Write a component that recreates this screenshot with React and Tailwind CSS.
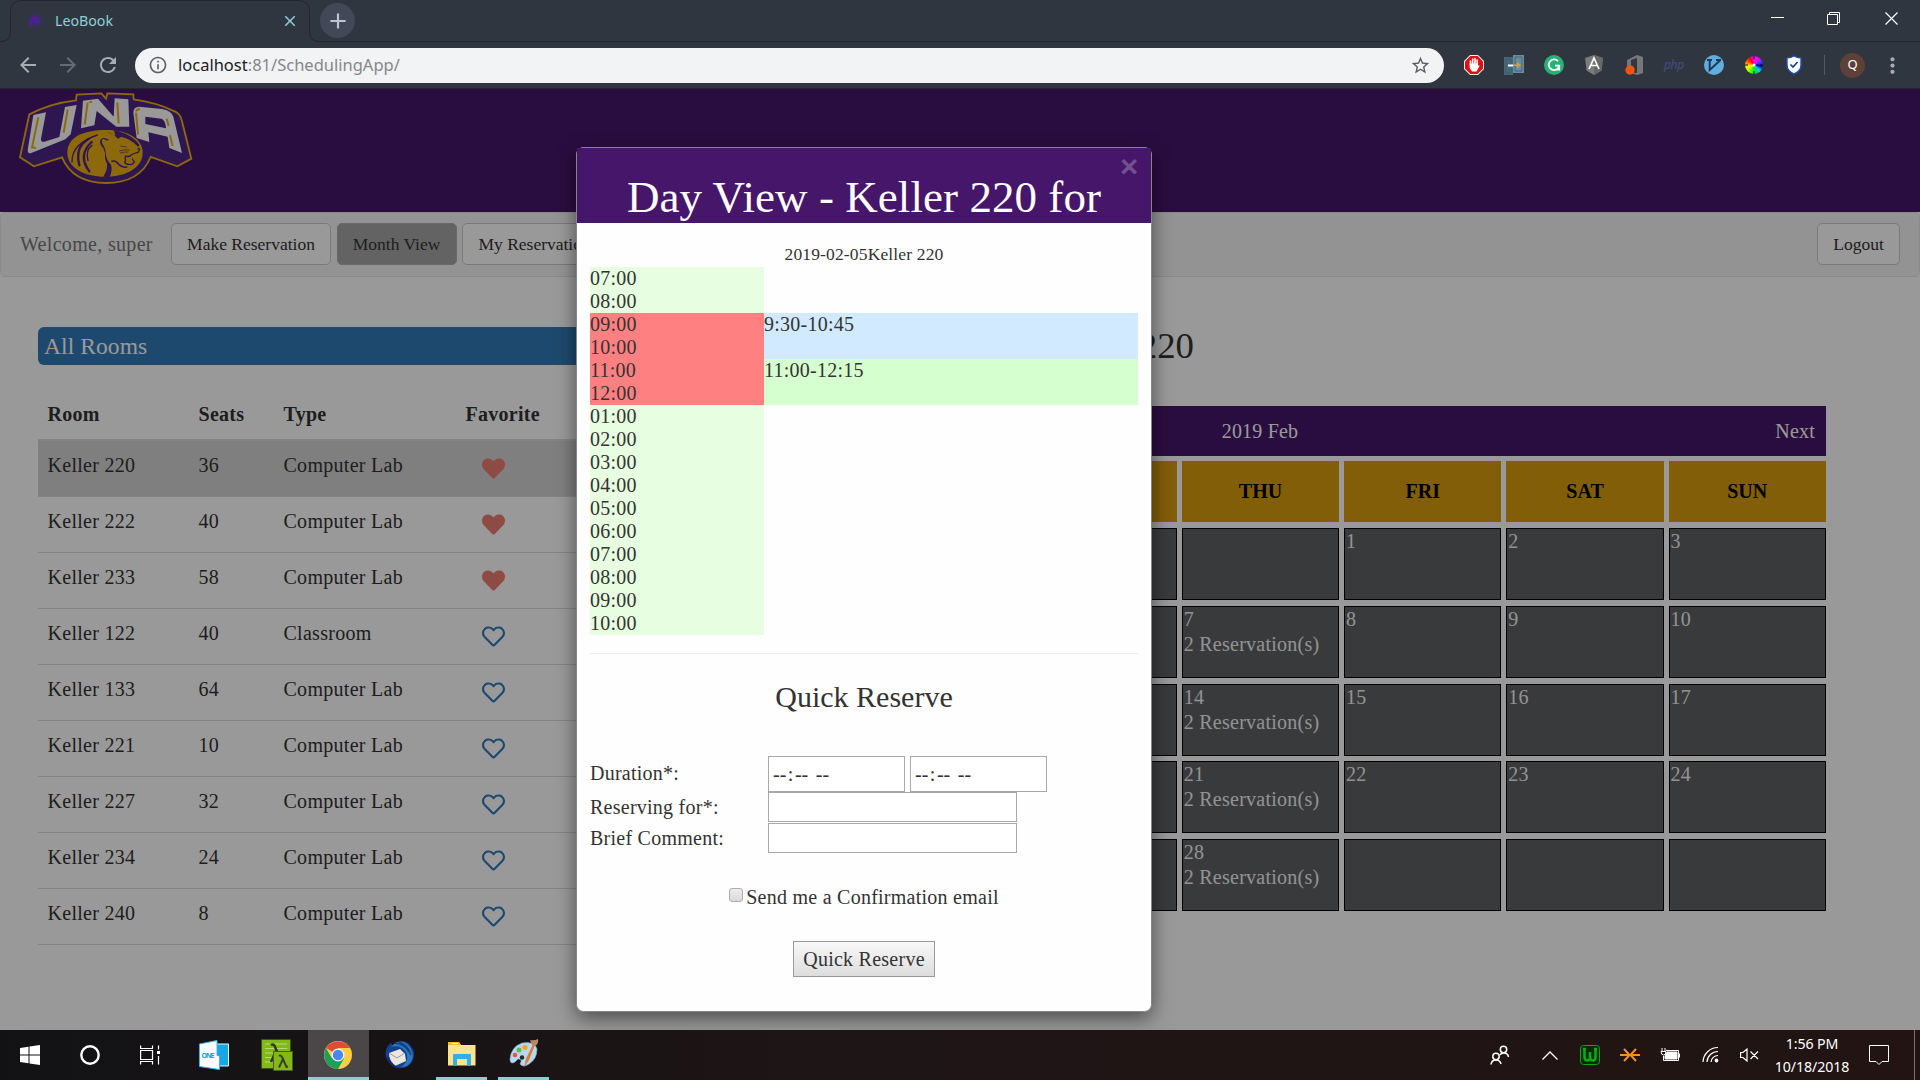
import React from "react";
import {
  MdArrowBack,
  MdArrowForward,
  MdRefresh,
  MdInfoOutline,
  MdStarBorder,
  MdClose,
  MdAdd,
  MdMoreVert,
} from "react-icons/md";
import { FaHeart, FaRegHeart } from "react-icons/fa";

const rooms = [
  ["Keller 220", 36, "Computer Lab", true],
  ["Keller 222", 40, "Computer Lab", true],
  ["Keller 233", 58, "Computer Lab", true],
  ["Keller 122", 40, "Classroom", false],
  ["Keller 133", 64, "Computer Lab", false],
  ["Keller 221", 10, "Computer Lab", false],
  ["Keller 227", 32, "Computer Lab", false],
  ["Keller 234", 24, "Computer Lab", false],
  ["Keller 240", 8, "Computer Lab", false],
];

const weekdays = ["MON", "TUE", "WED", "THU", "FRI", "SAT", "SUN"];

// February 2019 starts on a Friday; Tuesdays and Thursdays hold two classes.
const days = Array.from({ length: 35 }, (_, i) => {
  const day = i - 3;
  return {
    day: day >= 1 && day <= 28 ? day : null,
    booked: day >= 1 && day <= 28 && (i % 7 === 1 || i % 7 === 3),
  };
});

const hours = [
  "07:00", "08:00", "09:00", "10:00", "11:00", "12:00", "01:00", "02:00",
  "03:00", "04:00", "05:00", "06:00", "07:00", "08:00", "09:00", "10:00",
];

function Browser() {
  return (
    <div className="h-[89px] shrink-0 bg-[#303640] font-['Noto_Sans',sans-serif]">
      <div className="relative flex h-[42px] items-start">
        <svg className="absolute left-0 top-0" width="1920" height="42" fill="none">
          <path
            d="M0 41.5H2Q10.5 41 10.5 32V11Q11 .5 21 .5H299Q309.5 1 309.5 11V32Q310 41.5 319 41.5H1920"
            stroke="#22272f"
          />
        </svg>
        <div className="relative flex h-[42px] w-[310px] items-center pl-[25px]">
          <svg width="20" height="20" viewBox="0 0 20 20">
            <circle cx="10" cy="10" r="9" fill="#36305a" opacity=".6" />
            <path d="M5 10Q5 5 10 5Q16 6 15 12L13 14Q10 11 7 12Q7 14 8 16Q4 14 5 10Z" fill="#4a2092" />
          </svg>
          <span className="ml-[10px] text-[14.2px] text-[#8fd0d4]">LeoBook</span>
          <MdClose className="ml-auto mr-[11px] text-[#8fd0d4]" size={18} />
        </div>
        <div className="relative ml-[10px] mt-[3px] flex h-[35px] w-[35px] items-center justify-center rounded-full bg-[#424857] text-[#bdc3d3]">
          <MdAdd size={26} />
        </div>
        <div className="relative ml-auto mr-[22px] flex h-[37px] items-center gap-[43px]">
          <div className="mb-[2px] h-px w-[13px] bg-white" />
          <svg width="13" height="13" fill="none" stroke="#fff">
            <path d="M.5 2.5H10.5V12.5H.5ZM2.5 2.5V.5H12.5V10.5H10.5" />
          </svg>
          <svg width="13" height="13" fill="none" stroke="#fff" className="ml-[2px]" strokeWidth="1.2">
            <path d="M.5 .5L12.5 12.5M12.5 .5L.5 12.5" />
          </svg>
        </div>
      </div>
      <div className="flex h-[47px] items-center border-b border-[#22272b] pl-4 pr-[15px]">
        <MdArrowBack size={24} color="#a9acb1" />
        <MdArrowForward className="ml-4" size={24} color="#666b73" />
        <MdRefresh className="ml-4" size={24} color="#a9acb1" />
        <div className="ml-[15px] flex h-[35px] w-[1309px] items-center rounded-full bg-[#f1f3f4] pl-[13px] pr-[13px]">
          <MdInfoOutline size={20} color="#5f6368" />
          <span className="ml-[10px] text-[16.5px] text-[#84888c]">
            <span className="text-[#1d2023]">localhost</span>:81/SchedulingApp/
          </span>
          <MdStarBorder className="ml-auto" size={21} color="#5a5e63" />
        </div>
        <Extensions />
        <div className="ml-[20px] h-5 w-px bg-[#565a62]" />
        <div className="ml-[15px] flex h-[25px] w-[25px] items-center justify-center rounded-full bg-[#5d4037] text-[13px] text-white">
          Q
        </div>
        <MdMoreVert className="ml-auto" size={25} color="#a9acb1" />
      </div>
    </div>
  );
}

function Extensions() {
  return (
    <div className="ml-5 flex items-center gap-5">
      <svg width="20" height="20" viewBox="0 0 20 20">
        <path d="M6 0H14L20 6V14L14 20H6L0 14V6Z" fill="#eee" />
        <path d="M6.4 1H13.6L19 6.4V13.6L13.6 19H6.4L1 13.6V6.4Z" fill="#e01010" />
        <path d="M6.500 10V6M8.700 9V4M11 9V3.500M13.200 9V5" stroke="#fff" strokeWidth="1.600" strokeLinecap="round" />
        <path d="M5.700 8.500H14V11L15 10Q16 10 15 12L12.500 16.500H8L5.700 13Z" fill="#fff" />
      </svg>
      <svg width="20" height="20" viewBox="0 0 20 20">
        <path d="M0 2H9V20H0Z" fill="#466778" />
        <path d="M9 0H20V18H9Z" fill="#6c8b9c" />
        <path d="M11 2H18V16H11ZM2 4H7V18H2Z" fill="none" stroke="#38596a" strokeWidth=".7" />
        <path d="M4 10.500H9" stroke="#fff" strokeWidth="2" />
        <path d="M9 9.500H13V7L17 10L13 13V11H9Z" fill="#f39a1d" />
      </svg>
      <svg width="20" height="20" viewBox="0 0 20 20" fill="none">
        <circle cx="10" cy="10" r="10" fill="#25b373" />
        <path d="M14 6.200A5.300 5.300 0 1 0 15.300 10.600H11M15.200 10.500V14.500H12" stroke="#fff" strokeWidth="1.8" />
      </svg>
      <svg width="20" height="20" viewBox="0 0 20 20">
        <path d="M10 0L19 3L17.500 15.500L10 20L2.500 15.500L1 3Z" fill="#7b7b7b" />
        <path d="M10 0L19 3L17.500 15.500L10 20Z" fill="#686868" />
        <path d="M5 14L10 3L15 14M7 10.500H13" fill="none" stroke="#fff" strokeWidth="1.7" />
      </svg>
      <svg width="20" height="20" viewBox="0 0 20 20">
        <path d="M3 5L13 0L19 2V18L13 20L4 17L13 18V3L7 5V14L3 15Z" fill="#777" />
        <circle cx="6" cy="15" r="4.700" fill="#f25511" />
      </svg>
      <span className="w-5 text-center text-[12px] italic leading-5 text-[#454d88]">
        <span className="-mx-1 tracking-[-.2px]">php</span>
      </span>
      <svg width="20" height="20" viewBox="0 0 20 20" fill="none">
        <circle cx="10" cy="10" r="10" fill="#62ade0" />
        <path d="M3 5H8M12 5H17M5.700 5.500V15L16 5.500" stroke="#1d3b52" strokeWidth="2" />
      </svg>
      <div className="flex h-5 w-5 items-center justify-center">
        <div className="flex h-[18px] w-[18px] items-center justify-center rounded-full bg-[conic-gradient(#f0f,#f0f,#44f,#00a,#0cf,#0d5,#2f0,#bf0,#fe0,#f60,#f00,#f0f)]">
          <svg width="18" height="18" stroke="#111" strokeWidth="1">
            <path d="M9 0V3M9 15V18M0 9H3M15 9H18" />
            <circle cx="9" cy="9" r="1.500" fill="#fff" stroke="none" />
          </svg>
        </div>
      </div>
      <svg width="20" height="20" viewBox="0 0 20 20">
        <path d="M10 1Q13 3 17 3V10Q17 16 10 19Q3 16 3 10V3Q7 3 10 1Z" fill="#fff" stroke="#1c4fb8" strokeWidth="1.400" />
        <path d="M6.500 9.500L9 12L13.500 7" fill="none" stroke="#173f99" strokeWidth="1.700" />
      </svg>
    </div>
  );
}

function Logo() {
  return (
    <svg width="190" height="101" viewBox="0 9 570 303" className="ml-[10px]">
      <path
        d="M58 85Q120 52 198 43L200 26L274 22L288 38L292 22L370 25L371 40Q440 50 487 73Q510 80 515 102L544 218L502 241L422 213Q390 291 288 291Q188 290 156 214L72 241L30 214Z"
        fill="#4d2686"
        stroke="#ecaf14"
        strokeWidth="5.500"
      />
      <g fill="#fff">
        <path d="M70 87L108 79L93 158Q93 170 103 167L148 153L165 63L200 57L182 145L166 160L62 202Q50 203 54 187Z" />
        <path d="M219 44L264 38L311 92L314 37L355 40L358 122L319 122L260 75L253 118L213 127Z" />
        <path
          fillRule="evenodd"
          d="M370 80Q370 62 388 62L456 69Q484 74 490 92L516 201L478 186L473 152L415 139L418 168L380 156ZM406 92V114L468 127Q466 101 454 98Z"
        />
      </g>
      <g fill="none" stroke="#ecaf14" strokeWidth="6">
        <path d="M85 94L66 184L78 186M173 70L161 140M233 50L224 116M238 48H246M322 50L326 112M378 76Q380 70 390 69M378 80L384 146M470 98L476 120M480 148L488 180" />
      </g>
      <path d="M172 200C172 154 218 132 290 132C352 132 398 158 398 200C398 244 350 272 286 272C220 272 172 244 172 200Z" fill="#ecaf14" />
      <path d="M312 133L316 149L290 138Q306 141 324 158L334 152Q362 158 384 182L389 178Q372 150 326 136Z" fill="#4d2686" />
      <path d="M281 159Q273 159 277 174Q285 182 287 200Q288 222 303 236Q308 252 299 274L280 272Q293 252 291 234Q283 218 285 200Q281 184 272 176Q265 159 281 155L296 160Q292 167 288 162Z" fill="#4d2686" />
      <g fill="none" stroke="#4d2686" strokeLinecap="round">
        <path d="M186 228Q184 174 262 147" strokeWidth="4" />
        <path d="M208 238Q194 182 236 159" strokeWidth="7" />
        <path d="M238 256Q202 208 245 168" strokeWidth="7" />
        <path d="M234 224Q226 192 246 178" strokeWidth="4" />
        <path d="M332 180L349 183M328 195Q345 189 358 192M331 201Q345 197 354 198" strokeWidth="2" />
        <path d="M384 187L389 190L384 199Q371 201 362 208Q359 214 347 210Q343 216 347 222Q343 227 346 232Q366 241 373 228L367 219" strokeWidth="4" />
        <path d="M306 226Q317 222 326 235Q338 246 350 243" strokeWidth="5" />
      </g>
    </svg>
  );
}

function SchedulePage() {
  return (
    <>
      <header className="h-[123px] overflow-hidden bg-[#46166b]">
        <Logo />
      </header>
      <nav className="flex h-[65px] items-start rounded-[5px] border border-[#e7e7e7] bg-[#f6f6f6] pl-[19px] pr-[19px] pt-[10px] text-[17.5px] text-[#333]">
        <span className="w-[151px] text-[20px] leading-[42px] tracking-[.32px] text-[#777]">Welcome, super</span>
        <button className="h-[42px] w-[160px] rounded-[5px] border border-[#ccc] bg-white">Make Reservation</button>
        <button className="ml-[6px] h-[42px] w-[120px] rounded-[5px] border border-[#adadad] bg-[#a6a6a6] pr-px">Month View</button>
        <button className="ml-[5px] h-[42px] w-[152px] rounded-[5px] border border-[#ccc] bg-white">My Reservations</button>
        <button className="ml-auto h-[42px] w-[83px] rounded-[5px] border border-[#ccc] bg-white">Logout</button>
      </nav>
      <main className="flex pl-[38px]">
        <section className="w-[620px] pt-[50px] tracking-[.28px]">
          <h3 className="h-[38px] rounded-[6px] bg-[#337ab7] pl-[6px] text-[23.5px] leading-[38px] tracking-[.08px] text-white">
            All Rooms
          </h3>
          <div className="grid h-[76px] grid-cols-[151px_85px_182px_auto] border-b-2 border-[#ddd] pl-[9.5px] pt-[35px] font-bold leading-[28px]">
            <span>Room</span>
            <span>Seats</span>
            <span>Type</span>
            <span>Favorite</span>
          </div>
          {rooms.map(([name, seats, type, fav], i) => (
            <div
              key={name}
              className={
                "grid h-[56px] grid-cols-[151px_85px_198.500px_auto] border-b border-[#ddd] pl-[9.5px] pt-[10px] leading-[28px] " +
                (i === 0 ? "bg-[#d4d4d4]" : "")
              }
            >
              <span>{name}</span>
              <span>{seats}</span>
              <span>{type}</span>
              {fav ? (
                <FaHeart className="mt-[6px]" size={23} color="#ed7d70" />
              ) : (
                <FaRegHeart className="mt-[6px]" size={23} color="#337ab7" />
              )}
            </div>
          ))}
        </section>
        <section className="ml-[37px] w-[1131px] pt-[49px]">
          <h2 className="w-[499px] text-right text-[36.8px] leading-[40px]">Keller 220</h2>
          <div className="mt-[40px] grid h-[50px] grid-cols-3 bg-[#46166b] pl-[10px] pr-[11px] leading-[51px] tracking-[.2px] text-white">
            <span>Prev</span>
            <span className="text-center">2019 Feb</span>
            <span className="text-right">Next</span>
          </div>
          <div className="mt-[5px] grid grid-cols-7 gap-x-[4.8px]">
            {weekdays.map((d) => (
              <div key={d} className="h-[61px] bg-[#d99d0f] text-center font-bold leading-[60px] text-black">
                {d}
              </div>
            ))}
          </div>
          <div className="mt-[6px] grid grid-cols-7 gap-x-[4.8px] gap-y-[5.75px] leading-[25px] tracking-[.25px] text-[#f4f4f4]">
            {days.map(({ day, booked }, i) => (
              <div key={i} className="h-[72px] border border-black bg-[#5e6163] pl-[1px]">
                <div>{day}</div>
                {booked && <div>2 Reservation(s)</div>}
              </div>
            ))}
          </div>
        </section>
      </main>
    </>
  );
}

function TimeField() {
  return (
    <div className="flex h-[36px] w-[137px] items-center border border-[#a9a9a9] bg-white pl-[4px] tracking-normal">
      <span>--</span>
      <span className="mx-[1.5px]">:</span>
      <span>--</span>
      <span className="ml-[7.5px]">--</span>
    </div>
  );
}

function DayDialog() {
  return (
    <div className="absolute left-[576px] top-[58px] flex h-[865px] w-[576px] flex-col rounded-[7.5px] border border-[#888] bg-[#fefefe] tracking-[.25px] text-[#333] shadow-[0_6px_19px_rgba(0,0,0,0.5)]">
      <div className="relative h-[75px] shrink-0 bg-[#46166b] pt-[23.5px] text-center text-[45px] leading-[50px] tracking-[.06px] text-white">
        Day View - Keller 220 for
        <span className="absolute right-[12px] top-[2px] text-[34px] font-bold leading-[34px] text-[#73508f] [-webkit-text-stroke:1px_#73508f]">
          ×
        </span>
      </div>
      <div className="px-[13px]">
        <div className="mt-[19px] h-[25px] text-center text-[17.5px] leading-[24px] tracking-[.15px]">2019-02-05Keller 220</div>
        <div className="flex leading-[23px]">
          <div className="w-[174px]">
            {hours.map((h, i) => (
              <div key={i} className={i >= 2 && i <= 5 ? "bg-[#ff8080]" : "bg-[#e7ffe0]"}>
                {h}
              </div>
            ))}
          </div>
          <div className="flex-1 pt-[46px]">
            <div className="h-[46px] bg-[#d1eaff]">9:30-10:45</div>
            <div className="h-[46px] bg-[#d6ffcf]">11:00-12:15</div>
          </div>
        </div>
        <hr className="mt-[18px] border-[#eee]" />
        <h3 className="mt-[23px] text-center text-[30px] leading-[40px] tracking-normal">Quick Reserve</h3>
        <div className="mt-[39px] flex h-[36px]">
          <span className="w-[178px] leading-[34px]">Duration*:</span>
          <div className="flex gap-[5px]">
            <TimeField />
            <TimeField />
          </div>
        </div>
        <div className="flex h-[31px]">
          <span className="w-[178px] leading-[31px]">Reserving for*:</span>
          <div className="h-[30px] w-[249px] border border-[#a9a9a9] bg-white" />
        </div>
        <div className="flex h-[30px]">
          <span className="w-[178px] leading-[31px]">Brief Comment:</span>
          <div className="h-[30px] w-[249px] border border-[#a9a9a9] bg-white" />
        </div>
        <div className="mt-[30px] flex h-[28px] justify-center leading-[28px]">
          <span className="mr-[3px] mt-[5px] h-[14px] w-[14px] rounded-[3px] border border-[#acacac] bg-gradient-to-b from-[#ededed] to-[#d9d9d9]" />
          Send me a Confirmation email
        </div>
        <button className="mx-auto mt-[30px] block h-[36px] w-[142px] border border-[#9a9a9a] bg-gradient-to-b from-[#f8f8f8] to-[#dddddd] pb-px leading-[32px]">
          Quick Reserve
        </button>
      </div>
    </div>
  );
}

function Taskbar() {
  return (
    <footer className="flex h-[50px] shrink-0 bg-gradient-to-r from-[#121214] via-[#1f1516] to-[#211413] font-['Noto_Sans',sans-serif]">
      <div className="flex items-center pl-5">
        <svg width="20" height="20" fill="#fff">
          <path d="M0 3L8.500 1.800V9.500H0ZM9.500 1.600L20 0V9.500H9.500ZM0 10.500H8.500V18.200L0 17ZM9.500 10.500H20V20L9.500 18.400Z" />
        </svg>
        <svg width="20" height="20" className="ml-[40px]" fill="none" stroke="#fff" strokeWidth="2.400">
          <circle cx="10" cy="10" r="8.700" />
        </svg>
        <svg width="21" height="20" className="ml-[40px]" fill="none" stroke="#fff" strokeWidth="1.200">
          <path d="M.6 .500V3.500H12.500V.500M.6 5.500H12.500V14.500H.6ZM.6 19.500V16.500H12.500V19.500M18.500 .500V4.500M18.500 11V19.500" />
          <path d="M17 6H20V9H17Z" fill="#fff" stroke="none" />
        </svg>
        <svg width="30" height="30" className="ml-[38px]">
          <path d="M17 4H29.500V26H17Z" fill="#13a9e4" stroke="#e8f7ff" />
          <path d="M.5 4L18 .500L18 15.500L20.500 16V29.500L.500 26.500Z" fill="#fff" stroke="#35b5ea" />
          <text x="2.500" y="17.500" fontSize="7" fontWeight="bold" fill="#13a0dc" textLength="13" fontFamily="Noto Sans">ONE</text>
        </svg>
        <svg width="32" height="32" className="ml-[32px]">
          <path d="M.5 .500H29.500V29.500H.500Z" fill="#83b81a" stroke="#3c5410" />
          <path d="M4 5H26M4 9.500H26M4 14H26M4 18.500H12M4 23H12" stroke="#b5dc6b" />
          <path d="M10 6Q13 4 14.500 9L19 20M15.500 11L10 23" stroke="#2d3b1d" strokeWidth="2.500" fill="none" />
          <path d="M12.500 12.500H31.500V31.500H12.500Z" fill="#83b81a" stroke="#4c5a2a" />
          <path d="M18 17Q20 15.500 21.500 19L25.500 28L27 27.500M22 20L18 28.500" stroke="#394123" strokeWidth="2" fill="none" />
        </svg>
      </div>
      <div className="ml-[15px] flex w-[61px] items-center justify-center border-b-[3px] border-[#80d4d8] bg-[#4b4647] pr-[2px] pt-[3px]">
        <svg width="28" height="28" viewBox="0 0 28 28">
          <circle cx="14" cy="14" r="14" fill="#ffcd40" />
          <path d="M14 14L2 7A14 14 0 0 1 26.100 7H14Z" fill="#dd4b3e" />
          <path d="M2 7A14 14 0 0 0 14 28L20 17.500L14 14L8 17.500Z" fill="#1a9f5c" />
          <circle cx="14" cy="14" r="6.500" fill="#f4f4f4" />
          <circle cx="14" cy="14" r="5.200" fill="#4a86f5" />
        </svg>
      </div>
      <div className="ml-[16px] mr-px flex items-center">
        <svg width="30" height="30">
          <path d="M1 17Q-1 8 6 3L8 6Q18 -3 25 5Q32 13 27 22Q22 29 13 28Q4 26 1 17Z" fill="#163f91" />
          <path d="M6 7Q14 -2 22 4Q30 11 27 20Q23 28 16 27Q25 21 21 12Q15 4 6 7Z" fill="#2a78bd" />
          <path d="M10 3Q20 4 24 12M14 2Q23 5 26 15" stroke="#114081" strokeWidth="1.500" fill="none" />
          <path d="M4 13L15 9L20 14L21 21L10 26Q4 22 4 13Z" fill="#eae6e0" />
          <path d="M4 13L12 18L20 13" stroke="#a29b95" fill="none" />
          <path d="M1 17Q5 28 15 28Q7 25 4 17Z" fill="#182a70" />
        </svg>
      </div>
      <div className="ml-[20px] flex w-[51px] items-center justify-center border-b-[3px] border-[#80d4d8] pt-[1px]">
        <svg width="28" height="26">
          <path d="M0 2Q0 1 1 1H11L13 4H27.500V24.500H0Z" fill="#ffe28c" />
          <path d="M0 1H11L12.500 4H0Z" fill="#f6bb20" />
          <path d="M4 2.500H10" stroke="#fff8d8" />
          <path d="M5 14Q5 13 6 13H22Q23 13 23 14V24.500H19V18H9V24.500H5Z" fill="#38aee0" />
        </svg>
      </div>
      <div className="ml-[11px] flex w-[51px] items-center justify-center border-b-[3px] border-[#80d4d8]">
        <svg width="30" height="30">
          <path d="M13 4Q26 2 28 10Q28 20 20 25Q14 29 11 25Q14 20 9 20L6 23Q1 26 1 20Q2 8 13 4Z" fill="#b6d9ef" stroke="#7fadc9" strokeWidth=".6" />
          <circle cx="13" cy="18.500" r="2.200" fill="#20272d" />
          <circle cx="6" cy="16" r="2.300" fill="#e25348" />
          <circle cx="10" cy="11" r="2.500" fill="#5dbb45" />
          <circle cx="16" cy="8.500" r="2.500" fill="#f4a42b" />
          <path d="M15 28.500L17 20L24 5L26 6L20 21Z" fill="#dc7e31" />
          <path d="M23 6L21 1Q25 2 29 0Q30 5 26 7Z" fill="#b78a65" />
        </svg>
      </div>
      <div className="ml-auto flex items-center">
        <svg width="20" height="20" fill="none" stroke="#fff" strokeWidth="1.500">
          <circle cx="13.500" cy="4.500" r="3.200" />
          <circle cx="6" cy="11.500" r="3.200" />
          <path d="M1 19.500Q1.500 15 6 15Q10 15 11 19M10 10Q11 8 13.500 8Q18 8 18.500 12" />
        </svg>
        <svg width="16" height="9" className="ml-[32px]" fill="none" stroke="#fff" strokeWidth="1.300">
          <path d="M.5 8.500L8 1L15.500 8.500" />
        </svg>
        <svg width="20" height="20" className="ml-[22px]" fill="none">
          <rect x=".500" y=".500" width="19" height="19" rx="3" fill="#062b08" stroke="#0ea315" />
          <path d="M3 4H6M4.500 3V12Q4.500 15.500 7.500 15.500Q10 15.500 10 12V7V12Q10 15.500 13 15.500Q15.500 15.500 15.500 12V3M14 4H17" stroke="#0eaa18" strokeWidth="2.600" />
        </svg>
        <svg width="20" height="16" className="ml-[20px]" fill="none" stroke="#f4901e" strokeWidth="2">
          <path d="M0 8H20M4 2L9.500 8L4 14M16 2L10.500 8L16 14" />
          <path d="M8 2.500H12" stroke="#111" strokeWidth="3" />
        </svg>
        <svg width="20" height="14" className="ml-[20px]" fill="none" stroke="#fff">
          <path d="M6 2.500H18.500V12.500H3.500V8" />
          <path d="M7 4H17V11H5V8Z" fill="#fff" />
          <path d="M19.500 5.500V9.500M1 3.500H6M2 0V3M5 0V3M1 3.500Q1 7 3.500 7Q6 7 6 3.500" />
        </svg>
        <svg width="18" height="18" className="ml-[22px]" fill="none" stroke="#fff" strokeWidth="1.200">
          <path d="M1 16A15 15 0 0 1 16 1.500M5 16A11 11 0 0 1 16 5.500M9 16A7 7 0 0 1 16 9.500" />
          <circle cx="14.500" cy="14.500" r="1.300" fill="#fff" />
        </svg>
        <svg width="19" height="14" className="ml-[20px]" fill="none" stroke="#fff" strokeWidth="1.200">
          <path d="M.6 4.500H3L7 1V13L3 9.500H.6ZM10.500 3.500L18 11M18 3.500L10.500 11" />
        </svg>
        <div className="ml-[14px] w-[78px] whitespace-nowrap text-center text-[14.2px] leading-[23px] tracking-[-.1px] text-white">
          <div>1:56 PM</div>
          <div>10/18/2018</div>
        </div>
        <svg width="20" height="21" className="ml-[18px]" fill="none" stroke="#fff">
          <path d="M.5 .500H19.500V16.500H13L10 19.500L7 16.500H.500Z" />
        </svg>
        <div className="ml-[25px] mr-[5px] h-[50px] w-px bg-[#77706f]" />
      </div>
    </footer>
  );
}

export default function App() {
  return (
    <div className="flex h-[1080px] w-[1920px] flex-col overflow-hidden font-['Liberation_Serif',serif] text-[20px] text-[#333]">
      <Browser />
      <div className="relative h-[941px] shrink-0 overflow-hidden bg-white">
        <SchedulePage />
        <div className="absolute inset-0 bg-black/40" />
        <DayDialog />
      </div>
      <Taskbar />
    </div>
  );
}
